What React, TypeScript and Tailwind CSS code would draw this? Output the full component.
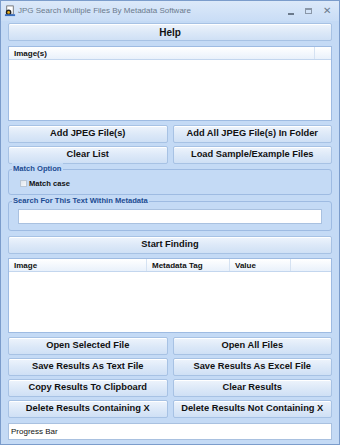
import React from "react";

const font = { fontFamily: '"Liberation Sans", Arial, sans-serif' };

function Btn({ children, className = "" }: { children: React.ReactNode; className?: string }) {
  return (
    <div
      className={
        "flex h-[18px] items-center justify-center whitespace-nowrap rounded-[2px] border border-[#a7c2e4] bg-gradient-to-b from-[#eef4fc] via-[#dde9f8] to-[#cfe0f5] text-[9.3px] font-bold text-[#111] shadow-[inset_0_1px_0_#ffffff] " +
        className
      }
    >
      {children}
    </div>
  );
}

function Group({ label, children, className = "" }: { label: string; children: React.ReactNode; className?: string }) {
  return (
    <div className={"relative rounded-[3px] border border-[#9ebbe2] " + className}>
      <span className="absolute left-[3px] top-[-7px] bg-[#c4daf5] px-[1px] text-[7.6px] font-bold leading-[12px] text-[#1c4c92]">
        {label}
      </span>
      {children}
    </div>
  );
}

export default function App() {
  return (
    <div style={font} className="flex h-[445px] w-[340px] flex-col overflow-hidden border border-[#7b9ccb] bg-[#c4daf5]">
      {/* Title bar */}
      <div className="flex h-[20px] items-center bg-gradient-to-b from-[#dce9f9] to-[#c9ddf6] pl-[3px] pr-[8px]">
        <svg width="12" height="12" viewBox="0 0 13 13" className="mr-[2px]">
          <rect x="3" y="1" width="7" height="9" fill="#fff" stroke="#555" strokeWidth="0.8" />
          <circle cx="5" cy="8" r="3" fill="#222" />
          <circle cx="5" cy="8" r="1.5" fill="#e8b020" />
          <rect x="1" y="10" width="11" height="2" fill="#3a6fc0" />
        </svg>
        <span className="text-[8px] text-[#6b7a8c]">JPG Search Multiple Files By Metadata Software</span>
        <div className="ml-auto flex items-center gap-[11px] text-[#6b7a8c]">
          <span className="mt-[5px] block h-[2px] w-[6px] bg-[#6b7a8c]" />
          <span className="block h-[6px] w-[7px] border border-t-2 border-[#8a97a8]" />
          <span className="text-[10px] leading-none">✕</span>
        </div>
      </div>

      <div className="flex flex-1 flex-col px-[7px] pt-[2px]">
        <Btn className="h-[17px] text-[10px]">Help</Btn>

        {/* Images list */}
        <div className="mt-[5px] flex h-[75px] flex-col border border-[#9ebbe2] bg-white">
          <div className="flex h-[13px] border-b border-[#c3d6ee] bg-gradient-to-b from-[#ffffff] to-[#e9f1fb] text-[8px] font-bold leading-[13px] text-[#111]">
            <div className="flex-1 pl-[5px]">Image(s)</div>
            <div className="w-[17px] border-l border-[#d5e2f2]" />
          </div>
        </div>

        <div className="mt-[4px] grid grid-cols-2 gap-x-[5px] gap-y-[3px]">
          <Btn>Add JPEG File(s)</Btn>
          <Btn>Add All JPEG File(s) In Folder</Btn>
          <Btn>Clear List</Btn>
          <Btn>Load Sample/Example Files</Btn>
        </div>

        <Group label="Match Option" className="mt-[5px] h-[26px]">
          <div className="flex items-center pl-[11px] pt-[8px]">
            <span className="mr-[2px] block h-[7px] w-[7px] border border-[#b9c7d6] bg-gradient-to-br from-[#dfe5ec] to-[#f6f8fa]" />
            <span className="text-[7.6px] font-bold text-[#111]">Match case</span>
          </div>
        </Group>

        <Group label="Search For This Text Within Metadata" className="mt-[6px] h-[30px]">
          <div className="px-[9px] pt-[7px]">
            <div className="h-[15px] border border-[#a9c1e0] bg-white" />
          </div>
        </Group>

        <Btn className="mt-[5px] h-[17px]">Start Finding</Btn>

        {/* Results list */}
        <div className="mt-[4px] flex h-[75px] flex-col border border-[#9ebbe2] bg-white">
          <div className="flex h-[13px] border-b border-[#c3d6ee] bg-gradient-to-b from-[#ffffff] to-[#e9f1fb] text-[8px] font-bold leading-[13px] text-[#111]">
            <div className="w-[138px] border-r border-[#d5e2f2] pl-[5px]">Image</div>
            <div className="w-[83px] border-r border-[#d5e2f2] pl-[5px]">Metadata Tag</div>
            <div className="w-[61px] border-r border-[#d5e2f2] pl-[5px]">Value</div>
            <div className="flex-1" />
          </div>
        </div>

        <div className="mt-[4px] grid grid-cols-2 gap-x-[5px] gap-y-[3px]">
          <Btn>Open Selected File</Btn>
          <Btn>Open All Files</Btn>
          <Btn>Save Results As Text File</Btn>
          <Btn>Save Results As Excel File</Btn>
          <Btn>Copy Results To Clipboard</Btn>
          <Btn>Clear Results</Btn>
          <Btn>Delete Results Containing X</Btn>
          <Btn>Delete Results Not Containing X</Btn>
        </div>

        <div className="mt-[5px] flex h-[17px] items-center border border-[#a9c1e0] bg-white pl-[2px] text-[8px] text-[#111]">
          Progress Bar
        </div>
      </div>
    </div>
  );
}
